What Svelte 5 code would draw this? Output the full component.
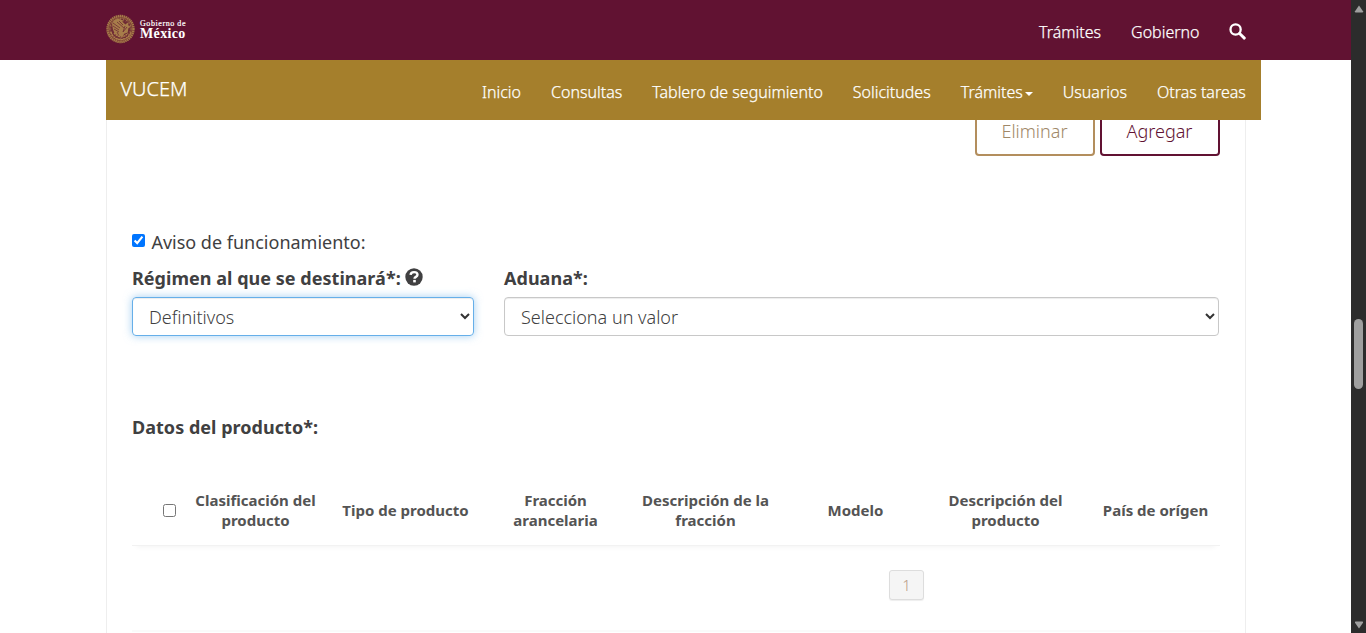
<script>
  const govLinks = ['Trámites', 'Gobierno'];
  const links = ['Inicio', 'Consultas', 'Tablero de seguimiento', 'Solicitudes', 'Trámites', 'Usuarios', 'Otras tareas'];
  const columns = [
    ['Clasificación del', 'producto'],
    ['Tipo de producto'],
    ['Fracción', 'arancelaria'],
    ['Descripción de la', 'fracción'],
    ['Modelo'],
    ['Descripción del', 'producto'],
    ['País de orígen']
  ];
  const rays = Array.from({ length: 20 }, (_, i) => i * 18);
</script>

<div class="window">
  <div class="page">
    <header>
      <a class="brand" href="#gob" aria-label="Gobierno de México">
        <svg class="seal" viewBox="0 0 30 30" width="30" height="30">
          <circle cx="14.5" cy="15" r="13" fill="#7b3d34" stroke="#a47a48" stroke-width="2.4" stroke-dasharray="1.5 .5" />
          <circle cx="14.5" cy="15" r="10.8" fill="#6e2b34" stroke="#a47a48" stroke-width=".5" />
          {#each rays as a}
            <path d="M14.5 3.8v2" stroke="#b88d5c" stroke-width=".5" transform="rotate({a} 14.5 15)" />
          {/each}
          <path d="M7 7.5Q10 3.8 14 5.2L18.5 7l-2.4.6 3.3 2.8 2.4-2 .8 3.4 2.2 1-2.4 1.5-.7 4.2-3.5 1.2-1.5 2.8-4.3-.5-3.8-2.5-1.7-4.2-.8-5z" fill="#a77d4a" />
          <path d="m7 9 7 5m-7-2 6 4m-5-1 5 3m-2-10 7 6m-5-7 4 4m2 1-2 6m4-5-4 5m-6 0 2 4" fill="none" stroke="#6e2b34" stroke-width=".8" />
          <path d="M5 18q2 7 10 7.5Q23 25 25 18M8 19q2 3 7 4 5-1 7-4" fill="none" stroke="#ad824c" stroke-width="1.3" stroke-dasharray="2 .6" />
        </svg>
        <span class="wordmark"><small>Gobierno de</small><strong>México</strong></span>
      </a>
      <nav class="gov">
        {#each govLinks as link}<a href="#gob">{link}</a>{/each}
        <svg viewBox="0 0 17 17" width="17" height="17"><circle cx="6.6" cy="6.5" r="5.1" fill="none" stroke="#fff" stroke-width="2.3" /><path d="m10.6 10.5 4.7 4.6" stroke="#fff" stroke-width="2.9" stroke-linecap="round" /></svg>
      </nav>
    </header>
    <div class="subnav">
      <a class="name" href="#vucem">VUCEM</a>
      <nav>
        {#each links as link}
          <a href="#nav">{link}{#if link === 'Trámites'}<i class="caret"></i>{/if}</a>
        {/each}
      </nav>
    </div>
    <main>
      <div class="actions"><button class="remove">Eliminar</button><button class="add">Agregar</button></div>
      <label class="notice"><input type="checkbox" checked /><span>Aviso de funcionamiento:</span></label>
      <div class="fields">
        <div class="field">
          <div class="label"><span>Régimen al que se destinará*:</span>
            <svg viewBox="0 0 18 18" width="18" height="18"><circle cx="9" cy="9" r="8.7" fill="#404041" /><path d="M5.6 6.9C5.7 4.8 7 4.1 9 4.1c2.2 0 3.5.9 3.5 2.6 0 2.3-3 2-3 4" fill="none" stroke="#fff" stroke-width="2.4" /><path d="M8.2 11.9h2.6v2.5H8.2z" fill="#fff" /></svg>
          </div>
          <div class="select focused"><span>Definitivos</span><svg viewBox="0 0 10 7" width="10" height="7"><path d="m1 1 4 4 4-4" /></svg></div>
        </div>
        <div class="field">
          <div class="label"><span>Aduana*:</span></div>
          <div class="select"><span>Selecciona un valor</span><svg viewBox="0 0 10 7" width="10" height="7"><path d="m1 1 4 4 4-4" /></svg></div>
        </div>
      </div>
      <h4>Datos del producto*:</h4>
      <div class="thead">
        <div class="check"><input type="checkbox" aria-label="check" /></div>
        {#each columns as lines}
          <div>{#each lines as line}<span>{line}</span>{/each}</div>
        {/each}
      </div>
      <div class="pager"><button>1</button></div>
    </main>
  </div>
  <div class="scrollbar">
    <svg viewBox="0 0 10 8" width="10" height="8"><path d="M5 .5 9 6.2q.4 1.3-.8 1.3H1.8Q.6 7.5 1 6.2z" /></svg>
    <div class="thumb"></div>
    <svg viewBox="0 0 10 8" width="10" height="8"><path d="M5 7.5 9 1.8Q9.4.5 8.2.5H1.8Q.6.5 1 1.8z" /></svg>
  </div>
</div>

<style>
  :global(body) { margin: 0; overflow: hidden; background: #fff; }
  * { box-sizing: border-box; }
  a { color: inherit; text-decoration: none; }
  .window { display: flex; width: 1366px; height: 633px; overflow: hidden; font: 300 18px/26px "Noto Sans", sans-serif; color: #404041; }
  .page { width: 1351px; height: 633px; display: flex; flex-direction: column; }
  header { flex: none; height: 60px; background: #611232; color: #fff; display: flex; justify-content: space-between; padding: 0 105px 0 106px; }
  .brand { display: flex; gap: 4px; height: 30px; margin-top: 14px; }
  .wordmark { display: flex; flex-direction: column; font-family: "Liberation Serif", serif; padding-top: 5px; }
  .wordmark small { font-size: 8px; line-height: 9px; font-weight: 400; letter-spacing: .57px; -webkit-text-stroke: .2px #fff; }
  .wordmark strong { font-size: 14px; line-height: 12px; font-weight: 700; letter-spacing: .35px; }
  .gov { display: flex; gap: 30px; font-size: 16px; line-height: 24px; padding-top: 20px; -webkit-text-stroke: .25px #fff; }
  .gov a { position: relative; left: .5px; }
  .gov svg { margin-top: 3px; }
  .subnav { flex: none; width: 1155px; height: 60px; margin-left: 106px; padding: 0 15.2px 0 14.4px; background: #a57f2c; color: #fff; display: flex; justify-content: space-between; -webkit-text-stroke: .25px #fff; }
  .name { font-size: 20px; line-height: 28px; margin-top: 15px; }
  .subnav nav { display: flex; gap: 30px; font-size: 16px; line-height: 24px; margin-top: 20px; white-space: nowrap; }
  .caret { display: inline-block; border: 4px solid transparent; border-top-color: #fff; border-bottom: 0; vertical-align: middle; margin-left: 2px; }
  main { width: 1140px; margin-left: 106px; flex: 1; border: solid #eee; border-width: 0 1px; padding: 0 25px; display: flex; flex-direction: column; }
  .actions { display: flex; justify-content: flex-end; gap: 5px; height: 36px; overflow: hidden; align-items: flex-end; }
  .actions button { width: 120px; height: 48px; border-radius: 4px; background: #fff; font: inherit; padding: 0 1px 2px 0; }
  .remove { border: 2px solid #b38e5d; color: #a08868; }
  .add { border: 2px solid #611232; color: #611232; }
  .notice { display: flex; align-items: center; gap: 6.4px; height: 26px; margin-top: 73px; font-weight: 400; }
  input { margin: 0; width: 13px; height: 13px; }
  .notice input { margin-bottom: 3px; }
  .fields { display: grid; grid-template-columns: 342px 715px; gap: 30px; margin-top: 10px; }
  .label { display: flex; gap: 4.7px; height: 32px; font-weight: 700; letter-spacing: .03px; }
  .label svg { margin-top: 3px; }
  .select { height: 39px; border: 1px solid #c8c8c8; border-radius: 4px; padding: 0 3px 0 16px; display: flex; align-items: center; justify-content: space-between; box-shadow: inset 0 1px 1px rgba(0,0,0,.075); }
  .select span { padding-top: 1px; }
  .select svg { fill: none; stroke: #333; stroke-width: 2; }
  .focused { border-color: #66afe9; box-shadow: inset 0 1px 1px rgba(0,0,0,.075), 0 0 8px rgba(102,175,233,.6); }
  h4 { margin: 78px 0 0; font: inherit; font-weight: 700; letter-spacing: .03px; }
  .thead { display: grid; grid-template-columns: 48.5px repeat(7, 150px); height: 106px; padding-top: 35px; border-bottom: 1px solid #f2f2f2; font-size: 15px; line-height: 20px; font-weight: 700; color: #545454; width: 1088px; overflow: hidden; box-shadow: 0 5px 6px -5px #eee; flex: none; }
  .thead > div { height: 70px; display: flex; flex-direction: column; align-items: center; justify-content: center; }
  .thead .check { align-items: flex-end; padding-right: 4.5px; }
  .pager { height: 86px; flex: none; border-bottom: 2px solid #fafafa; padding: 24px 0 0 757px; }
  .pager button { display: block; width: 35px; height: 30px; padding: 0; border: 1px solid #ddd; border-radius: 3px; background: #f5f5f5; color: #b99c86; font: 300 15px/26px "Noto Sans", sans-serif; box-shadow: 0 1px 1px #eee; }
  .scrollbar { width: 15px; height: 633px; background: #2c2c2c; display: flex; flex-direction: column; align-items: center; padding: 5px 0 4px; }
  .scrollbar svg { fill: #9f9f9f; flex: none; }
  .thumb { width: 9px; height: 70px; border-radius: 5px; background: #9f9f9f; margin: 306px 0 auto; }
</style>
